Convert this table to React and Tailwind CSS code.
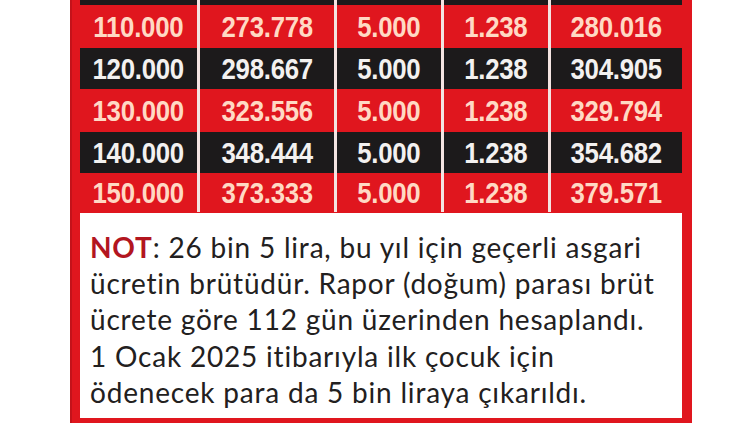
const rows = [
  { dark: true, h: "h-[5px]", vals: ["", "", "", "", ""] },
  { dark: false, h: "h-[43px]", vals: ["110.000", "273.778", "5.000", "1.238", "280.016"] },
  { dark: true, h: "h-[41px]", vals: ["120.000", "298.667", "5.000", "1.238", "304.905"] },
  { dark: false, h: "h-[43px]", vals: ["130.000", "323.556", "5.000", "1.238", "329.794"] },
  { dark: true, h: "h-[41px]", vals: ["140.000", "348.444", "5.000", "1.238", "354.682"] },
  { dark: false, h: "h-[39px]", vals: ["150.000", "373.333", "5.000", "1.238", "379.571"] },
];

export default function App() {
  return (
    <div className="w-[750px] h-[423px] bg-white flex overflow-hidden">
      <div className="ml-[70px] w-[622px] h-full bg-[#e0161e] border-l-2 border-[#c4121a] pl-[8px] pr-[10px] flex flex-col">
        <div className="grid grid-cols-[117px_134px_104px_104px_131px] gap-x-[3px] bg-[#f4e4e2]">
          {rows.map((r, i) =>
            r.vals.map((v, j) => (
              <div
                key={i + "-" + j}
                className={`${r.h} flex items-center justify-center ${
                  r.dark ? "bg-[#1c1a1b] text-[#f3f1f0]" : "bg-[#e0161e] text-[#ffd9c4]"
                }`}
              >
                <span className="inline-block scale-x-[0.86] font-bold text-[30px] leading-none font-['Liberation_Sans',Arial,sans-serif] tracking-[-0.3px]">
                  {v}
                </span>
              </div>
            ))
          )}
        </div>
        <div className="mt-[1px] h-[205px] bg-white pl-[10px] pt-[16px] text-[28px] leading-[36.2px] tracking-[0.8px] text-[#222020] font-['Lato','Open_Sans',sans-serif]">
          <span className="font-bold text-[#b3161f]">NOT</span>: 26 bin 5 lira, bu yıl için geçerli asgari
          <br />
          ücretin brütüdür. Rapor (doğum) parası brüt
          <br />
          ücrete göre 112 gün üzerinden hesaplandı.
          <br />
          1 Ocak 2025 itibarıyla ilk çocuk için
          <br />
          ödenecek para da 5 bin liraya çıkarıldı.
        </div>
      </div>
    </div>
  );
}
